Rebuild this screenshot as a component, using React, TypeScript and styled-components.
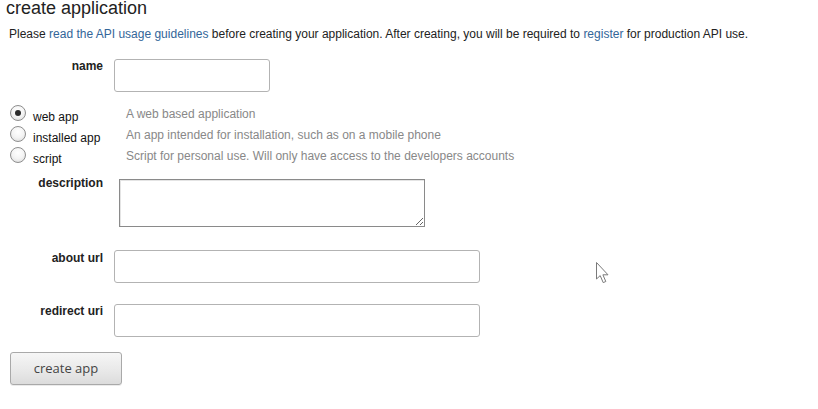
import React from "react";
import styled, { createGlobalStyle } from "styled-components";

const Global = createGlobalStyle`
  html, body { margin: 0; padding: 0; background: #fff; }
  body { font-family: "Liberation Sans", Arial, sans-serif; }
`;

const Page = styled.div`
  position: relative;
  width: 818px;
  height: 409px;
  overflow: hidden;
  font-family: "Liberation Sans", Arial, sans-serif;
  font-size: 12px;
  color: #222;
`;

const Title = styled.h1`
  margin: 0;
  padding-left: 6px;
  font-size: 18px;
  font-weight: normal;
  line-height: 16px;
  color: #222;
`;

const Intro = styled.p`
  margin: 11px 0 0 9px;
  line-height: 14px;
`;

const Link = styled.a`
  color: #369;
  text-decoration: none;
`;

const Row = styled.div<{ $top: number }>`
  display: flex;
  align-items: flex-start;
  margin-top: ${(p) => p.$top}px;
`;

const Label = styled.label<{ $drop?: number }>`
  width: 103px;
  flex-shrink: 0;
  text-align: right;
  font-weight: bold;
  line-height: 14px;
  padding-top: ${(p) => p.$drop ?? 0}px;
  color: #222;
`;

const TextInput = styled.input<{ $w: number }>`
  box-sizing: border-box;
  width: ${(p) => p.$w}px;
  height: 33px;
  margin: 1px 0 0 11px;
  border: 1px solid #b3b3b3;
  border-radius: 3px;
  background: #fff;
  padding: 2px 6px;
  font: 12px "Liberation Sans", Arial, sans-serif;
  outline: none;
`;

const WideInput = styled(TextInput)`
  margin-top: 0;
`;

const TextArea = styled.textarea`
  box-sizing: border-box;
  width: 306px;
  height: 48px;
  margin: 3px 0 0 16px;
  border: 1px solid #8a8a8a;
  box-shadow: inset 1px 1px 0 #e4e4e4;
  border-radius: 0;
  background: #fff;
  padding: 2px;
  font: 12px "Liberation Sans", Arial, sans-serif;
  outline: none;
`;

const RadioList = styled.div`
  margin-top: 12px;
`;

const RadioRow = styled.div`
  display: flex;
  align-items: flex-start;
  height: 21px;
`;

const RadioLabel = styled.label`
  display: flex;
  align-items: flex-start;
  width: 126px;
  box-sizing: border-box;
  padding-left: 10px;
  flex-shrink: 0;
`;

const Radio = styled.input`
  appearance: none;
  -webkit-appearance: none;
  box-sizing: border-box;
  width: 16px;
  height: 16px;
  margin: 1px 0 0 0;
  border: 1px solid #8e8e8e;
  border-radius: 50%;
  background: radial-gradient(circle at 50% 35%, #ffffff 0%, #f4f4f4 50%, #d8d8d8 100%);
  position: relative;
  &:checked::after {
    content: "";
    position: absolute;
    left: 4px;
    top: 4px;
    width: 6px;
    height: 6px;
    border-radius: 50%;
    background: #2b2b2b;
  }
`;

const RadioText = styled.span`
  margin-left: 7px;
  padding-top: 6px;
  line-height: 14px;
  color: #111;
`;

const RadioDesc = styled.span`
  padding-top: 3px;
  line-height: 14px;
  color: #888;
`;

const SubmitButton = styled.button`
  display: block;
  box-sizing: border-box;
  width: 112px;
  height: 33px;
  margin: 15px 0 0 10px;
  border: 1px solid #a9a9a9;
  border-radius: 3px;
  background: linear-gradient(to bottom, #f6f6f6 0%, #e9e9e9 55%, #dcdcdc 100%);
  box-shadow: 0 1px 0 rgba(0, 0, 0, 0.08);
  font: 13px "Open Sans", "Noto Sans", sans-serif;
  line-height: 30px;
  color: #444;
  padding: 0 0 1px 0;
  cursor: default;
`;

const Pointer = styled.svg`
  position: absolute;
  left: 595px;
  top: 261px;
`;

const kinds = [
  { id: "web", label: "web app", desc: "A web based application", checked: true },
  { id: "installed", label: "installed app", desc: "An app intended for installation, such as on a mobile phone", checked: false },
  { id: "script", label: "script", desc: "Script for personal use. Will only have access to the developers accounts", checked: false },
];

export default function App() {
  return (
    <Page>
      <Global />
      <Title>create application</Title>
      <Intro>
        Please <Link href="#">read the API usage guidelines</Link> before creating your application. After creating, you
        will be required to <Link href="#">register</Link> for production API use.
      </Intro>

      <Row $top={17}>
        <Label htmlFor="name" $drop={1}>name</Label>
        <TextInput id="name" $w={156} />
      </Row>

      <RadioList>
        {kinds.map((k) => (
          <RadioRow key={k.id}>
            <RadioLabel>
              <Radio type="radio" name="app_type" defaultChecked={k.checked} />
              <RadioText>{k.label}</RadioText>
            </RadioLabel>
            <RadioDesc>{k.desc}</RadioDesc>
          </RadioRow>
        ))}
      </RadioList>

      <Row $top={9}>
        <Label htmlFor="description">description</Label>
        <TextArea id="description" />
      </Row>

      <Row $top={23}>
        <Label htmlFor="about" $drop={1}>about url</Label>
        <WideInput id="about" $w={366} />
      </Row>

      <Row $top={21}>
        <Label htmlFor="redirect">redirect uri</Label>
        <WideInput id="redirect" $w={366} />
      </Row>

      <SubmitButton type="button">create app</SubmitButton>

      <Pointer width="16" height="24" viewBox="0 0 16 24">
        <path
          d="M1.5 1.5 L1.5 18 L5.2 14.6 L8.2 21.6 L10.8 20.5 L7.9 13.8 L13 13.8 Z"
          fill="#fff"
          stroke="#7a7a7a"
          strokeWidth="1"
          strokeLinejoin="round"
        />
      </Pointer>
    </Page>
  );
}
